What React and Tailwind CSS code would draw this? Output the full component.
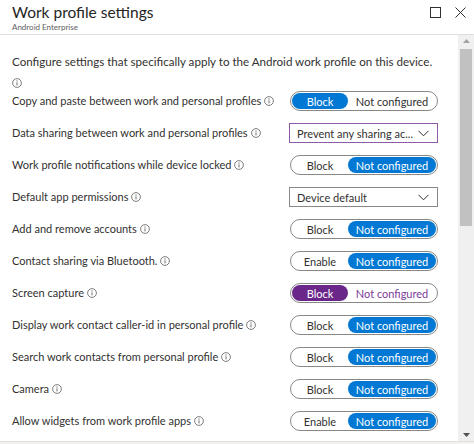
import React from "react";

const ROWS = [
  { label: "Copy and paste between work and personal profiles", kind: "toggle", left: "Block", value: "left" },
  { label: "Data sharing between work and personal profiles", kind: "select", value: "Prevent any sharing ac...", focused: true },
  { label: "Work profile notifications while device locked", kind: "toggle", left: "Block", value: "right" },
  { label: "Default app permissions", kind: "select", value: "Device default" },
  { label: "Add and remove accounts", kind: "toggle", left: "Block", value: "right" },
  { label: "Contact sharing via Bluetooth.", kind: "toggle", left: "Enable", value: "right" },
  { label: "Screen capture", kind: "toggle", left: "Block", value: "left", purple: true },
  { label: "Display work contact caller-id in personal profile", kind: "toggle", left: "Block", value: "right" },
  { label: "Search work contacts from personal profile", kind: "toggle", left: "Block", value: "right" },
  { label: "Camera", kind: "toggle", left: "Block", value: "right" },
  { label: "Allow widgets from work profile apps", kind: "toggle", left: "Enable", value: "right" },
];

function InfoIcon() {
  return (
    <svg width="10" height="10" viewBox="0 0 10 10" className="inline-block shrink-0 text-[#605e5c]">
      <circle cx="5" cy="5" r="4.4" fill="none" stroke="currentColor" strokeWidth="0.8" />
      <line x1="5" y1="4.3" x2="5" y2="7.4" stroke="currentColor" strokeWidth="0.9" />
      <circle cx="5" cy="2.9" r="0.55" fill="currentColor" />
    </svg>
  );
}

function Chevron() {
  return (
    <svg width="11" height="7" viewBox="0 0 11 7" className="text-[#323130]">
      <path d="M0.5 0.8 L5.5 5.8 L10.5 0.8" fill="none" stroke="currentColor" strokeWidth="1" />
    </svg>
  );
}

function Toggle({ left, value, purple }) {
  const on = purple ? "bg-[#6b2689] text-white" : "bg-[#0078d4] text-white";
  const offText = purple ? "text-[#7b3b99]" : "text-[#323130]";
  return (
    <div className="flex h-[20px] w-[148px] shrink-0 items-center rounded-full border border-[#8a8886] bg-white p-[1px] text-[11px] leading-none whitespace-nowrap">
      <span
        className={`flex h-full w-[56px] items-center justify-center rounded-full ${value === "left" ? on : offText}`}
      >
        {left}
      </span>
      <span
        className={`flex h-full flex-1 items-center justify-center rounded-full ${value === "right" ? on : offText}`}
      >
        Not configured
      </span>
    </div>
  );
}

function Select({ value, focused }) {
  return (
    <div
      className={`flex h-[20px] w-[149px] shrink-0 items-center justify-between border bg-white pl-[7px] pr-[8px] text-[11px] leading-none whitespace-nowrap text-[#323130] ${
        focused ? "border-[#8f5ba8]" : "border-[#8a8886]"
      }`}
    >
      <span>{value}</span>
      <Chevron />
    </div>
  );
}

export default function App() {
  return (
    <div
      className="flex h-[444px] w-[474px] flex-col overflow-hidden bg-white text-[#323130]"
      style={{ fontFamily: 'Lato, "Open Sans", sans-serif' }}
    >
      {/* blade header */}
      <header className="flex h-[35px] shrink-0 items-start justify-between border-b border-[#e1dfdd] pl-[12px] pr-[8px]">
        <div className="flex flex-col">
          <h1 className="mt-[2px] text-[15.5px] leading-[20px] text-[#252423]">Work profile settings</h1>
          <p className="text-[8px] leading-[10px] text-[#605e5c]">Android Enterprise</p>
        </div>
        <div className="mt-[7px] flex items-center gap-[14px]">
          <svg width="11" height="11" viewBox="0 0 11 11">
            <rect x="0.5" y="0.5" width="10" height="10" fill="none" stroke="#323130" strokeWidth="1" />
          </svg>
          <svg width="11" height="11" viewBox="0 0 11 11">
            <path d="M0.5 0.5 L10.5 10.5 M10.5 0.5 L0.5 10.5" stroke="#323130" strokeWidth="1" />
          </svg>
        </div>
      </header>

      <div className="flex min-h-0 flex-1">
        {/* settings list */}
        <div className="min-w-0 flex-1 overflow-hidden pl-[12px] pr-[20px] pt-[19px]">
          <p className="text-[11.6px] leading-[15px] whitespace-nowrap">
            Configure settings that specifically apply to the Android work profile on this device.
          </p>
          <div className="mt-[4px] h-[10px] leading-none">
            <InfoIcon />
          </div>
          <div className="mt-[8px] flex flex-col gap-[12px]">
            {ROWS.map((row) => (
              <div key={row.label} className="flex h-[20px] items-center justify-between">
                <span className="flex items-center gap-[3px] text-[11px] whitespace-nowrap">
                  {row.label}
                  <InfoIcon />
                </span>
                {row.kind === "toggle" ? (
                  <Toggle left={row.left} value={row.value} purple={row.purple} />
                ) : (
                  <Select value={row.value} focused={row.focused} />
                )}
              </div>
            ))}
          </div>
        </div>

        {/* vertical scrollbar */}
        <div className="flex w-[16px] shrink-0 flex-col items-center bg-[#f0f0f0] pt-[4px]">
          <svg width="7" height="4" viewBox="0 0 7 4">
            <path d="M0 4 L3.5 0 L7 4 Z" fill="#a3a3a3" />
          </svg>
          <div className="mt-[6px] h-[177px] w-[12px] bg-[#c1c1c1]" />
          <div className="flex-1" />
          <svg width="7" height="4" viewBox="0 0 7 4" className="mb-[4px]">
            <path d="M0 0 L3.5 4 L7 0 Z" fill="#505050" />
          </svg>
        </div>
      </div>
      <div className="h-[3px] shrink-0 border-t border-[#e1dfdd] bg-[#f3f2f1]" />
    </div>
  );
}
